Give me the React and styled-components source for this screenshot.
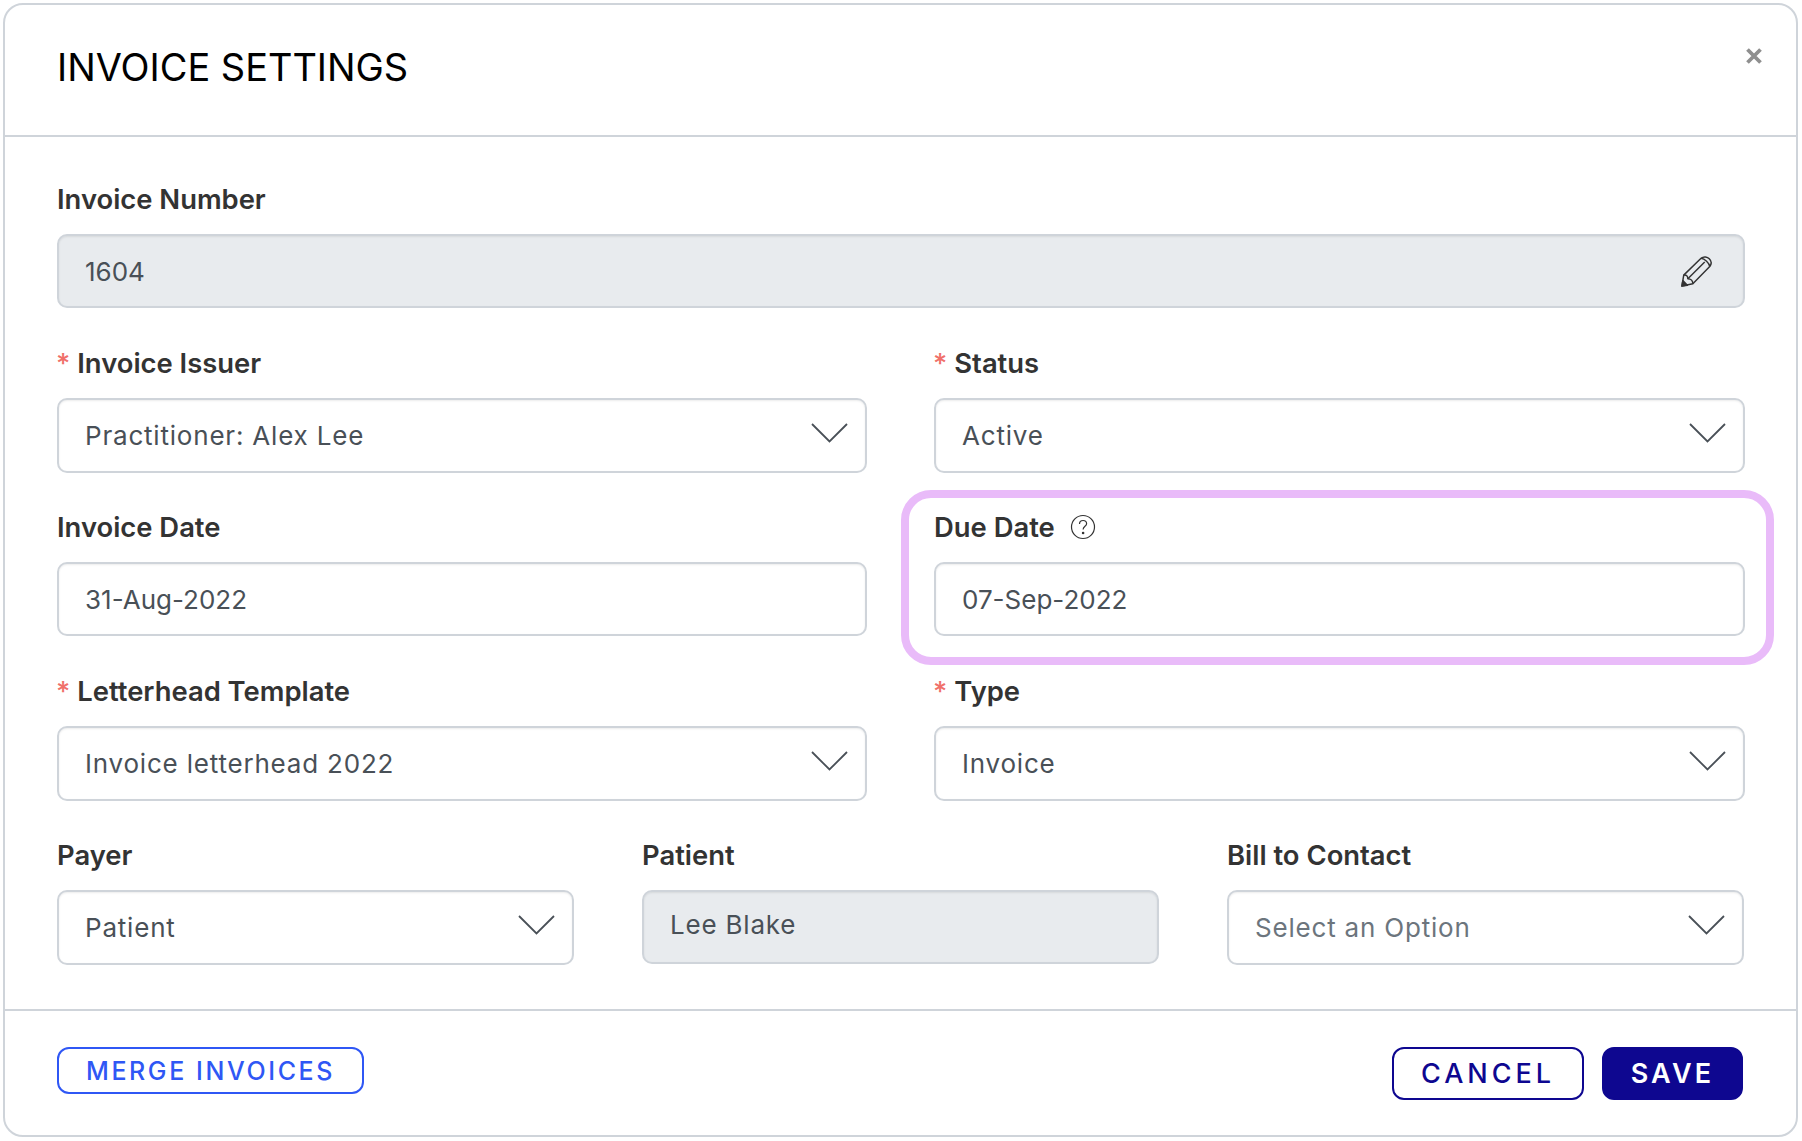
import React from 'react'
import styled, { createGlobalStyle } from 'styled-components'

const GlobalStyle = createGlobalStyle`
  html, body {
    margin: 0;
    padding: 0;
    background: #fff;
  }
  body {
    font-family: Inter, "Liberation Sans", sans-serif;
  }
`

const Card = styled.div`
  box-sizing: border-box;
  width: 1795px;
  height: 1134px;
  margin: 3px 0 0 3px;
  border: 2px solid #cfd4da;
  border-radius: 20px;
  display: flex;
  flex-direction: column;
  background: #fff;
`

const Header = styled.header`
  box-sizing: border-box;
  height: 132px;
  padding: 0 52px;
  border-bottom: 2px solid #cfd4da;
  display: flex;
  align-items: flex-start;
  justify-content: space-between;
`

const Title = styled.h1`
  margin: 40px 0 0;
  font-size: 37.900px;
  line-height: 44px;
  font-weight: 400;
  color: #000;
`

const CloseButton = styled.button`
  margin: 39px -22px 0 0;
  padding: 0;
  border: 0;
  background: none;
  width: 24px;
  height: 24px;
  color: #8f8f8f;
  cursor: pointer;
`

const Body = styled.div`
  flex: 1;
  padding: 46px 51px 0 52px;
  display: flex;
  flex-direction: column;
  gap: 38.600px;
`

const Row = styled.div`
  display: grid;
  grid-template-columns: ${({ $cols }) => ($cols === 3 ? 'repeat(3, 1fr)' : '810px 1fr')};
  column-gap: ${({ $cols }) => ($cols === 3 ? '68px' : '67px')};
  margin-right: ${({ $cols }) => ($cols === 3 ? '1px' : '0')};
`

const Field = styled.div`
  display: flex;
  flex-direction: column;
  gap: 19px;
  position: relative;
`

const Ring = styled.div`
  position: absolute;
  top: -21px;
  bottom: -29px;
  left: -33px;
  right: -29px;
  border: 8px solid #e9bbf9;
  border-radius: 30px;
  pointer-events: none;
`

const Label = styled.label`
  display: flex;
  align-items: center;
  height: 32px;
  font-size: 27.400px;
  font-weight: 600;
  color: #333;
`

const Star = styled.span`
  color: #f0706a;
  margin: 0 7px 0 -1px;
  font-weight: 500;
`

const HelpIcon = styled.svg`
  width: 26px;
  height: 26px;
  margin-left: 15px;
`

const Control = styled.div`
  box-sizing: border-box;
  height: ${({ $select }) => ($select ? '75px' : '74px')};
  padding: 0 ${({ $select }) => ($select ? '17px' : '31px')} ${({ $lift }) => ($lift ? '5px' : '0')} 26px;
  border: 2px solid #cfd4da;
  border-radius: 10px;
  display: flex;
  align-items: center;
  justify-content: space-between;
  font-size: 26px;
  letter-spacing: ${({ $numeric }) => ($numeric ? '0' : '0.8px')};
  color: ${({ $muted }) => ($muted ? '#6c757d' : '#495057')};
  background: ${({ $disabled }) => ($disabled ? '#e8ebee' : '#fff')};
  box-shadow: inset 0 1px 2px rgba(0, 0, 0, 0.08);
`

const Footer = styled.footer`
  box-sizing: border-box;
  height: 126px;
  padding: 36px 53px 0 52px;
  border-top: 2px solid #cfd4da;
  display: flex;
  align-items: flex-start;
  justify-content: space-between;
`

const Actions = styled.div`
  display: flex;
  gap: 18px;
`

const Button = styled.button`
  box-sizing: border-box;
  height: ${({ $small }) => ($small ? '47px' : '53px')};
  width: ${({ $w }) => $w}px;
  border-radius: 12px;
  border: 2px solid ${({ $color }) => $color};
  background: ${({ $fill, $color }) => ($fill ? $color : '#fff')};
  color: ${({ $fill, $color }) => ($fill ? '#fff' : $color)};
  font-family: inherit;
  font-size: ${({ $small }) => ($small ? '25px' : '27px')};
  font-weight: ${({ $fill }) => ($fill ? 600 : 500)};
  letter-spacing: ${({ $track }) => $track}px;
  padding: 0;
  cursor: pointer;
`

const ChevronIcon = styled.svg`
  width: 37px;
  height: 20px;
  margin-bottom: 5px;
`

const Chevron = () => (
  <ChevronIcon viewBox="0 0 37 20" fill="none" stroke="#495057" strokeWidth="1.800">
    <path d="M1 1l17.500 17.500L36 1" />
  </ChevronIcon>
)

const Pencil = () => (
  <svg width="31" height="31" viewBox="0 0 34 34" fill="none" stroke="#333" strokeWidth="1.600" strokeLinejoin="round">
    <path d="M1 33L3 21 22 2.500C25 0 29 1 31 3c2.500 2.500 2.500 6 .5 8.500L13 30.500z" />
    <path d="M3 21c3-.5 4.500 1 4.500 4 3 0 5.500 2 5.500 5.500" />
    <path d="M7.500 25L26 6.500" />
    <path d="M22 2.500c4 .5 9 5 9.500 9" />
    <path d="M1 33l1-6 5 5z" fill="#333" />
  </svg>
)

const Help = () => (
  <HelpIcon viewBox="0 0 26 26" fill="none" stroke="#333" strokeWidth="1.200">
    <circle cx="13" cy="13" r="11.500" />
    <path d="M9.500 10c0-2.200 1.600-3.500 3.600-3.500s3.500 1.400 3.500 3.200c0 2.600-3.500 2.700-3.500 5.800" />
    <circle cx="13.100" cy="19" r="0.700" fill="#333" />
  </HelpIcon>
)

const Close = () => (
  <svg width="24" height="24" viewBox="0 0 24 24" stroke="currentColor" strokeWidth="3.800">
    <path d="M5.500 5.500l13 13M18.500 5.500l-13 13" />
  </svg>
)

function SelectField({ label, value, required, muted }) {
  return (
    <Field>
      <Label>
        {required && <Star>*</Star>}
        {label}
      </Label>
      <Control $select $muted={muted}>
        {value}
        <Chevron />
      </Control>
    </Field>
  )
}

export default function App() {
  return (
    <>
      <GlobalStyle />
      <Card>
        <Header>
          <Title>INVOICE SETTINGS</Title>
          <CloseButton aria-label="Close">
            <Close />
          </CloseButton>
        </Header>
        <Body>
          <Field>
            <Label>Invoice Number</Label>
            <Control $disabled $numeric>
              1604
              <Pencil />
            </Control>
          </Field>
          <Row $cols={2}>
            <SelectField required label="Invoice Issuer" value="Practitioner: Alex Lee" />
            <SelectField required label="Status" value="Active" />
          </Row>
          <Row $cols={2}>
            <Field>
              <Label>Invoice Date</Label>
              <Control $numeric>31-Aug-2022</Control>
            </Field>
            <Field>
              <Label>
                Due Date
                <Help />
              </Label>
              <Control $numeric>07-Sep-2022</Control>
              <Ring />
            </Field>
          </Row>
          <Row $cols={2}>
            <SelectField required label="Letterhead Template" value="Invoice letterhead 2022" />
            <SelectField required label="Type" value="Invoice" />
          </Row>
          <Row $cols={3}>
            <SelectField label="Payer" value="Patient" />
            <Field>
              <Label>Patient</Label>
              <Control $disabled $lift>Lee Blake</Control>
            </Field>
            <SelectField muted label="Bill to Contact" value="Select an Option" />
          </Row>
        </Body>
        <Footer>
          <Button $small $w={307} $track={2.600} $color="#2f57f5">MERGE INVOICES</Button>
          <Actions>
            <Button $w={192} $track={4} $color="#0e0790">CANCEL</Button>
            <Button $w={141} $track={3.200} $fill $color="#0e0790">SAVE</Button>
          </Actions>
        </Footer>
      </Card>
    </>
  )
}
